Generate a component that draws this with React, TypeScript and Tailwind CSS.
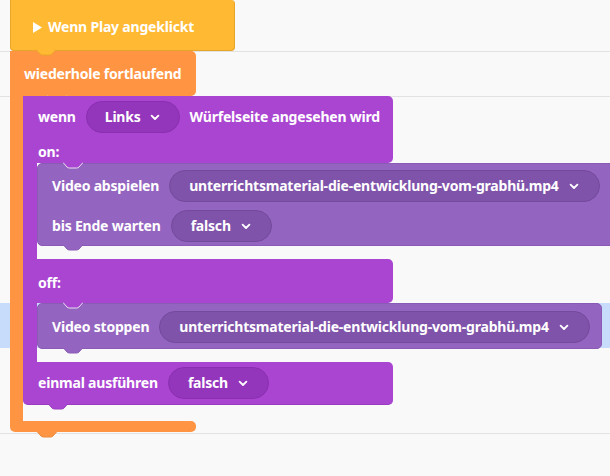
import React from "react";

const Chevron = () => (
  <svg width="10" height="7" viewBox="0 0 10 7" className="shrink-0">
    <path d="M1.6 1.6 L5 5 L8.4 1.6" fill="none" stroke="white" strokeWidth="1.8" strokeLinecap="round" strokeLinejoin="round" />
  </svg>
);

function Tab({ fill, stroke, className }: { fill: string; stroke: string; className: string }) {
  return (
    <svg width="20" height="7" viewBox="0 0 20 7" className={"absolute top-full -mt-[1px] z-20 " + className}>
      <path d="M0 0.5 L4 5 Q5 6 6.5 6 L13.5 6 Q15 6 16 5 L20 0.5 Z" fill={fill} />
      <path d="M0 0.5 L4 5 Q5 6 6.5 6 L13.5 6 Q15 6 16 5 L20 0.5" fill="none" stroke={stroke} strokeWidth="1" />
    </svg>
  );
}

function Pill({ label, variant, tight }: { label: string; variant: "main" | "inner"; tight?: boolean }) {
  const cls =
    variant === "main"
      ? "bg-[#9436bb] border-[#8a2fb0]"
      : "bg-[#8053aa] border-[#744a9c]";
  const pad = tight ? "pl-[18px] pr-[19px] gap-[9px]" : "pl-[19px] pr-[20px] gap-[10px]";
  return (
    <div className={"flex h-[32px] shrink-0 items-center rounded-full border " + pad + " " + cls}>
      <span>{label}</span>
      <Chevron />
    </div>
  );
}

const PURPLE = "#aa45d2";
const INNER = "#9465c0";
const ORANGE = "#ff9442";
const YELLOW = "#ffb932";

export default function App() {
  return (
    <div className="relative h-[476px] w-[610px] overflow-hidden bg-[#f9f9f9] font-['Noto_Sans',sans-serif]">
      {/* background rows */}
      <div className="flex flex-col">
        <div className="h-[52px] border-b border-[#e2e2e2]" />
        <div className="h-[45px] border-b border-[#e2e2e2]" />
        <div className="h-[206px]" />
        <div className="h-[45px] bg-[#c7dcfa]" />
        <div className="h-[86px] border-b border-[#e2e2e2]" />
      </div>

      {/* script */}
      <div className="absolute left-[10px] top-0 flex flex-col whitespace-nowrap text-[14px] font-bold leading-[18px] tracking-[-0.2px] text-white">
        {/* hat block */}
        <div className="relative z-30 flex h-[51px] w-[225px] items-center gap-[6px] rounded-b-[4px] rounded-tr-[4px] border border-t-0 border-[#e9a52b] bg-[#ffb932] pl-[22px] pt-[4px]">
          <svg width="9" height="11" viewBox="0 0 9 11" className="shrink-0">
            <path d="M0 0 L9 5.5 L0 11 Z" fill="white" />
          </svg>
          <span>Wenn Play angeklickt</span>
          <Tab fill={YELLOW} stroke="#e9a52b" className="left-[25px]" />
        </div>

        {/* forever block */}
        <div className="flex flex-col">
          <div className="relative z-20 flex h-[45px] w-[186px] items-center rounded-r-[5px] bg-[#ff9442] pl-[14px]">
            <span>wiederhole fortlaufend</span>
            <Tab fill={ORANGE} stroke="#f0f0f0" className="left-[37px]" />
          </div>
          <div className="flex">
            <div className="w-[13px] shrink-0 bg-[#ff9442]" />
            <div className="pb-[16px]">
              {/* if block */}
              <div className="flex flex-col">
                <div className="relative z-20 flex h-[67px] w-[370px] flex-col rounded-r-[5px] bg-[#aa45d2] pl-[15px] pt-[5px]">
                  <div className="flex h-[32px] items-center gap-[10px]">
                    <span>wenn</span>
                    <Pill label="Links" variant="main" tight />
                    <span>Würfelseite angesehen wird</span>
                  </div>
                  <div className="mt-[8px] flex h-[22px] items-center">
                    <span>on:</span>
                  </div>
                  <Tab fill={PURPLE} stroke="#e8e0f0" className="left-[40px]" />
                </div>
                <div className="flex">
                  <div className="w-[14px] shrink-0 bg-[#aa45d2]" />
                  <div className="pb-[13px]">
                    <div className="relative z-10 flex w-[590px] flex-col gap-[8px] rounded-[5px] border border-[#8a5bb6] bg-[#9465c0] pb-[3px] pl-[14px] pt-[6px]">
                      <div className="flex h-[32px] items-center gap-[10px]">
                        <span className="shrink-0">Video abspielen</span>
                        <Pill label="unterrichtsmaterial-die-entwicklung-vom-grabhü.mp4" variant="inner" />
                      </div>
                      <div className="flex h-[32px] items-center gap-[10px]">
                        <span className="shrink-0">bis Ende warten</span>
                        <Pill label="falsch" variant="inner" />
                      </div>
                      <Tab fill={INNER} stroke="#8a5bb6" className="left-[25px]" />
                    </div>
                  </div>
                </div>
                <div className="relative z-20 h-[44px] w-[370px] rounded-r-[5px] bg-[#aa45d2] pl-[15px] pt-[15px]">
                  <span>off:</span>
                  <Tab fill={PURPLE} stroke="#e8e0f0" className="left-[40px]" />
                </div>
                <div className="flex">
                  <div className="w-[14px] shrink-0 bg-[#aa45d2]" />
                  <div className="pb-[13px]">
                    <div className="relative z-10 flex h-[46px] w-[565px] items-center gap-[10px] rounded-[5px] border border-[#8a5bb6] bg-[#9465c0] pl-[14px] pt-[2px]">
                      <span className="shrink-0">Video stoppen</span>
                      <Pill label="unterrichtsmaterial-die-entwicklung-vom-grabhü.mp4" variant="inner" />
                      <Tab fill={INNER} stroke="#8a5bb6" className="left-[25px]" />
                    </div>
                  </div>
                </div>
                <div className="relative z-20 flex h-[43px] w-[370px] items-center gap-[10px] rounded-b-[5px] rounded-r-[5px] border-b border-[#9a3cc0] bg-[#aa45d2] pl-[15px]">
                  <span>einmal ausführen</span>
                  <Pill label="falsch" variant="main" />
                  <Tab fill={PURPLE} stroke="#9a3cc0" className="left-[25px]" />
                </div>
              </div>
            </div>
          </div>
          <div className="relative z-10 h-[11px] w-[186px] rounded-b-[5px] rounded-tr-[5px] bg-[#ff9442]">
            <Tab fill={ORANGE} stroke="#ea8a3e" className="left-[27px]" />
          </div>
        </div>
      </div>
    </div>
  );
}
